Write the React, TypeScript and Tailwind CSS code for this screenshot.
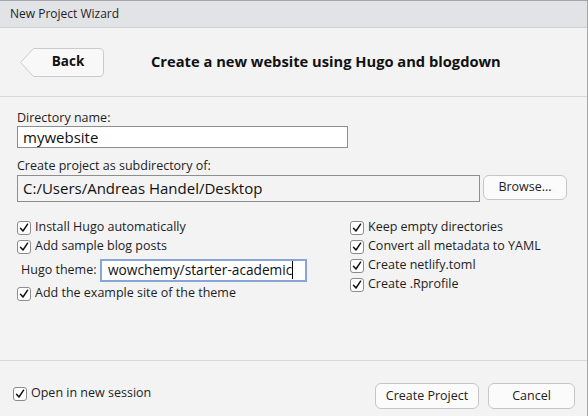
import type { ReactNode } from 'react';

const FONT = '[font-family:"Open_Sans","Noto_Sans",sans-serif]';

function Check({ label }: { label: string }) {
  return (
    <div className="flex h-[19px] items-center gap-[4px] whitespace-nowrap">
      <span className="flex h-[14px] w-[14px] shrink-0 items-center justify-center rounded-[3px] border border-[#8c8c8c] bg-white">
        <svg width="10" height="10" viewBox="0 0 10 10" fill="none">
          <path d="M1.5 5.2 L4 8 L8.6 1.2" stroke="#111" strokeWidth="1.5" strokeLinecap="round" strokeLinejoin="round" />
        </svg>
      </span>
      <span className="text-[12.5px] text-[#1d1d1d]">{label}</span>
    </div>
  );
}

function Btn({ children, className }: { children: ReactNode; className: string }) {
  return (
    <button
      className={`flex shrink-0 items-center justify-center rounded-[6px] border border-[#c6c6c6] bg-[#fbfbfb] text-[12.5px] text-[#222] ${className}`}
    >
      {children}
    </button>
  );
}

export default function App() {
  return (
    <div
      className={`flex h-[416px] w-[588px] flex-col overflow-hidden border-t border-r border-[#a7a7a7] bg-[#f3f3f3] ${FONT}`}
    >
      {/* title bar */}
      <div className="flex h-[27px] shrink-0 items-center border-b border-[#d0d0d2] bg-[#e2e3e6] pl-[10px] text-[12px] text-[#1e1e1e]">
        New Project Wizard
      </div>

      {/* header */}
      <div className="flex h-[69px] shrink-0 items-center border-b border-[#d8d8d8]">
        <button className="relative ml-[20px] flex h-[29px] w-[84px] items-center justify-center pl-[12px]">
          <svg className="absolute inset-0" width="84" height="29" viewBox="0 0 84 29">
            <path
              d="M0.5 14.5 L13.5 0.5 L79 0.5 Q83.5 0.5 83.5 5 L83.5 24 Q83.5 28.5 79 28.5 L13.5 28.5 Z"
              fill="#f8f8f8"
              stroke="#cbcbcb"
            />
          </svg>
          <span className="relative -mt-[2px] text-[13.5px] font-bold text-[#111]">Back</span>
        </button>
        <div className="ml-[47px] -mt-[2px] whitespace-nowrap text-[14.7px] font-bold text-[#111]">
          Create a new website using Hugo and blogdown
        </div>
      </div>

      {/* body */}
      <div className="flex-1 pl-[17px]">
        <div className="mt-[13px] h-[16px] text-[12.5px] leading-[16px] text-[#1d1d1d]">Directory name:</div>
        <div className="flex h-[22px] w-[331px] items-center border border-[#8e8e8e] bg-white pl-[5px] text-[15px] text-[#111]">
          mywebsite
        </div>
        <div className="mt-[10px] h-[16px] text-[12.5px] leading-[16px] text-[#1d1d1d]">
          Create project as subdirectory of:
        </div>
        <div className="mt-[1px] flex items-start">
          <div className="flex h-[27px] w-[463px] shrink-0 items-center border border-[#8e8e8e] bg-[#f3f3f3] pl-[5px] text-[15px] text-[#111]">
            C:/Users/Andreas Handel/Desktop
          </div>
          <Btn className="ml-[3px] h-[25px] w-[84px]">Browse...</Btn>
        </div>

        <div className="mt-[16px] flex">
          <div className="w-[333px] shrink-0">
            <Check label="Install Hugo automatically" />
            <Check label="Add sample blog posts" />
            <div className="mt-[3px] flex h-[23px] items-center whitespace-nowrap">
              <span className="w-[83px] shrink-0 pl-[4px] text-[12.5px] text-[#1d1d1d]">Hugo theme:</span>
              <div className="flex h-[23px] w-[207px] shrink-0 items-center border-2 border-[#88a5da] bg-white pl-[6px] text-[13.7px] text-[#111]">
                wowchemy/starter-academi
                <span className="relative">
                  c<span className="absolute -right-[1px] top-[1px] h-[18px] w-[1px] bg-black" />
                </span>
              </div>
            </div>
            <div className="mt-[2px]">
              <Check label="Add the example site of the theme" />
            </div>
          </div>
          <div>
            <Check label="Keep empty directories" />
            <Check label="Convert all metadata to YAML" />
            <Check label="Create netlify.toml" />
            <Check label="Create .Rprofile" />
          </div>
        </div>
      </div>

      {/* footer */}
      <div className="flex h-[56px] shrink-0 items-start border-t border-[#d8d8d8] pt-[22px]">
        <div className="ml-[13px] mt-[1px]">
          <Check label="Open in new session" />
        </div>
        <Btn className="ml-auto h-[26px] w-[104px]">Create Project</Btn>
        <Btn className="ml-[9px] mr-[12px] h-[26px] w-[87px]">Cancel</Btn>
      </div>
    </div>
  );
}
